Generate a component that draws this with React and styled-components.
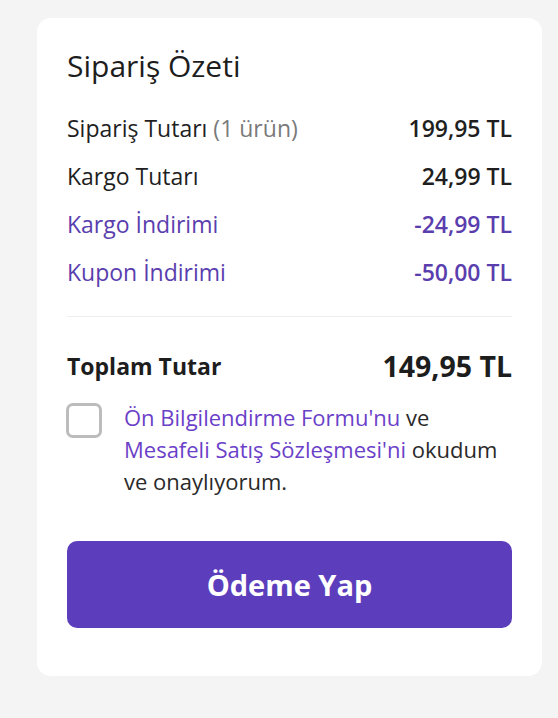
import React from "react";
import styled, { createGlobalStyle } from "styled-components";

const Global = createGlobalStyle`
  html, body { margin: 0; padding: 0; background: #f4f4f4; }
  body { font-family: "Open Sans", "Noto Sans", sans-serif; color: #1f1f1f; }
  * { box-sizing: border-box; }
`;

const Page = styled.div`
  padding: 18px 16px 0 37px;
  min-height: 718px;
`;

const Card = styled.section`
  width: 505px;
  background: #fff;
  border-radius: 14px;
  padding: 25px 30px 48px 30px;
  display: flex;
  flex-direction: column;
`;

const Title = styled.h2`
  margin: 0 0 24px 0;
  font-size: 30px;
  font-weight: 500;
  line-height: 46px;
  color: #1d1d1d;
`;

const Rows = styled.div`
  display: flex;
  flex-direction: column;
  gap: 18px;
`;

const Row = styled.div`
  display: flex;
  justify-content: space-between;
  align-items: center;
  font-size: 23px;
  line-height: 30px;
  color: ${(p) => (p.$accent ? "#5a3eae" : "#1f1f1f")};
`;

const Label = styled.span`
  font-weight: 400;
`;

const Muted = styled.span`
  color: #7a7a7a;
`;

const Value = styled.span`
  font-weight: 600;
`;

const Divider = styled.hr`
  border: 0;
  border-top: 1px solid #eeeeee;
  margin: 29px 0 0 0;
`;

const TotalRow = styled.div`
  display: flex;
  justify-content: space-between;
  align-items: center;
  margin-top: 29px;
  line-height: 40px;
`;

const TotalLabel = styled.span`
  font-size: 23px;
  font-weight: 700;
  color: #1d1d1d;
`;

const TotalValue = styled.span`
  font-size: 28.5px;
  font-weight: 700;
  color: #1d1d1d;
`;

const Consent = styled.label`
  display: flex;
  gap: 22px;
  align-items: flex-start;
  margin-top: 15px;
`;

const Box = styled.span`
  flex: none;
  width: 36px;
  height: 35px;
  margin-left: -1px;
  border: 3px solid #bcbcbc;
  border-radius: 7px;
  margin-top: 2px;
  background: #fff;
`;

const ConsentText = styled.p`
  margin: 0;
  font-size: 22px;
  line-height: 32px;
  color: #2a2a2a;
`;

const Link = styled.a`
  color: #6b3fc8;
  text-decoration: none;
`;

const PayButton = styled.button`
  margin-top: 44px;
  height: 87px;
  width: 100%;
  border: 0;
  border-radius: 10px;
  background: #5c3ebd;
  color: #fff;
  font-family: "Open Sans", "Noto Sans", sans-serif;
  font-size: 29px;
  font-weight: 700;
  cursor: pointer;
`;

export default function App() {
  return (
    <>
      <Global />
      <Page>
        <Card>
          <Title>Sipariş Özeti</Title>
          <Rows>
            <Row>
              <Label>
                Sipariş Tutarı <Muted>(1 ürün)</Muted>
              </Label>
              <Value>199,95 TL</Value>
            </Row>
            <Row>
              <Label>Kargo Tutarı</Label>
              <Value>24,99 TL</Value>
            </Row>
            <Row $accent>
              <Label>Kargo İndirimi</Label>
              <Value>-24,99 TL</Value>
            </Row>
            <Row $accent>
              <Label>Kupon İndirimi</Label>
              <Value>-50,00 TL</Value>
            </Row>
          </Rows>
          <Divider />
          <TotalRow>
            <TotalLabel>Toplam Tutar</TotalLabel>
            <TotalValue>149,95 TL</TotalValue>
          </TotalRow>
          <Consent>
            <Box />
            <ConsentText>
              <Link>Ön Bilgilendirme Formu'nu</Link> ve{" "}
              <Link>Mesafeli Satış Sözleşmesi'ni</Link> okudum ve onaylıyorum.
            </ConsentText>
          </Consent>
          <PayButton>Ödeme Yap</PayButton>
        </Card>
      </Page>
    </>
  );
}
